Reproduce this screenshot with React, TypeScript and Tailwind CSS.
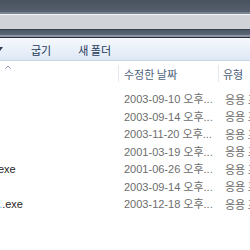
import { FC } from 'react'

const rows = [
    { name: '', date: '2003-09-10 오후...' },
    { name: '', date: '2003-09-14 오후...' },
    { name: '', date: '2003-11-20 오후...' },
    { name: '', date: '2001-03-19 오후...' },
    { name: 'exe', date: '2001-06-26 오후...' },
    { name: '', date: '2003-09-14 오후...' },
    { name: '1.exe', date: '2003-12-18 오후...' },
]

const kr = { fontFamily: '"Noto Sans CJK KR", "Liberation Sans", sans-serif' }

export default function App() {
    return (
        <div className="w-[250px] h-[250px] overflow-hidden bg-white flex flex-col" style={kr}>
            {/* window chrome */}
            <div className="h-[12px] shrink-0 bg-gradient-to-b from-[#48535f] to-[#56606e]" />
            <div className="h-[2px] shrink-0 bg-[#7a8492]" />
            <div className="h-[1px] shrink-0 bg-[#f4f5f7]" />
            <div className="h-[14px] shrink-0 bg-[#d0d3d8]" />
            <div className="h-[1px] shrink-0 bg-[#39414c]" />
            <div className="h-[5px] shrink-0 bg-gradient-to-b from-[#4d5867] to-[#5c6777]" />
            <div className="h-[2px] shrink-0 bg-[#8a94a2]" />
            <div className="h-[1px] shrink-0 bg-[#262c34]" />

            {/* command bar */}
            <div className="h-[23px] flex items-center text-[11px] text-[#1e395b] bg-gradient-to-b from-[#f6f9fd] to-[#dee8f5] border-b border-[#c9d5e3] shrink-0">
                <span className="ml-[-3px] w-0 h-0 border-l-[3.5px] border-r-[3.5px] border-t-[4px] border-l-transparent border-r-transparent border-t-[#2c3d55]" />
                <span className="ml-[28px] pt-[2px]">굽기</span>
                <span className="ml-[27px] pt-[2px]">새 폴더</span>
            </div>

            {/* column header */}
            <div className="h-[21px] flex text-[11px] text-[#4c607a] shrink-0">
                <div className="w-[118px] shrink-0 relative">
                    <svg className="absolute left-[5px] top-[4px]" width="6" height="4" viewBox="0 0 6 4">
                        <path d="M0.5 3.5 L3 1 L5.5 3.5" fill="none" stroke="#8496ab" strokeWidth="1" />
                    </svg>
                </div>
                <div className="w-[100px] shrink-0 border-l border-[#e4e9ef] pl-[5px] mt-[4px] h-[17px] leading-[14px] pt-[2px] whitespace-nowrap">
                    수정한 날짜
                </div>
                <div className="flex-1 border-l border-[#e4e9ef] pl-[4px] mt-[4px] h-[17px] leading-[14px] pt-[2px] whitespace-nowrap">
                    유형
                </div>
            </div>

            {/* rows */}
            <div className="flex flex-col pt-[8px] text-[11px]">
                {rows.map((r, i) => (
                    <div key={i} className="h-[17.5px] flex items-center whitespace-nowrap leading-[14px]">
                        <div className="w-[118px] shrink-0 overflow-hidden text-[#1e1e1e]" style={{ fontFamily: '"Liberation Sans", sans-serif' }}>
                            {r.name === '1.exe' ? (
                                <span className="ml-[-4px] inline-block">
                                    <span className="text-[#8fc3e8]">1</span>.exe
                                </span>
                            ) : r.name ? (
                                <span className="ml-[-2px] inline-block">{r.name}</span>
                            ) : null}
                        </div>
                        <div className="w-[100px] shrink-0 pl-[6px] text-[#6d6d6d]">
                            <span style={{ fontFamily: '"Liberation Sans", "Noto Sans CJK KR", sans-serif' }}>{r.date}</span>
                        </div>
                        <div className="shrink-0 pl-[7px] text-[#6d6d6d]">응용 프로그램</div>
                    </div>
                ))}
            </div>
        </div>
    )
}
